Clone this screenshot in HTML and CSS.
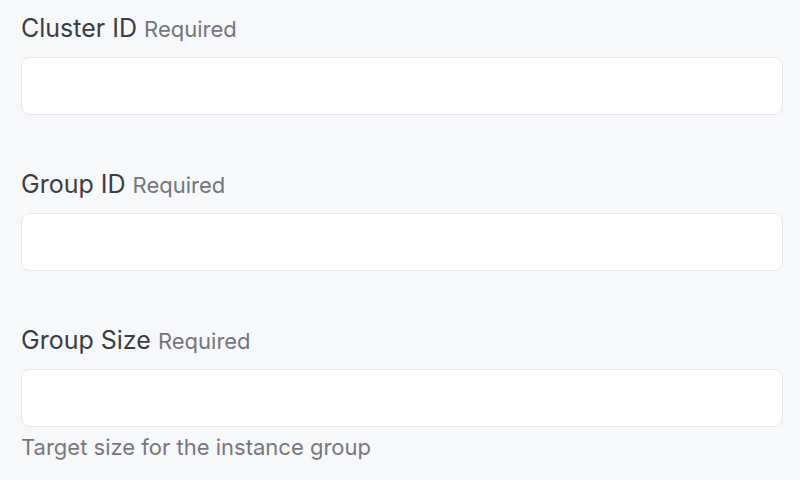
FILE: index.html
```html
<!DOCTYPE html>
<html>
    <head>
        <title>Instance Group</title>
        <link rel="stylesheet" href="styles.css">
    </head>
    <body>
        <form class="group-form">
            <div class="field">
                <label class="field-label" for="cluster_id">Cluster ID <span class="required">Required</span></label>
                <input class="field-input" type="text" id="cluster_id">
            </div>
            <div class="field">
                <label class="field-label" for="group_id">Group ID <span class="required">Required</span></label>
                <input class="field-input" type="text" id="group_id">
            </div>
            <div class="field">
                <label class="field-label" for="group_size">Group Size <span class="required">Required</span></label>
                <input class="field-input" type="text" id="group_size">
                <p class="help_text">Target size for the instance group</p>
            </div>
        </form>
    </body>
</html>
```

FILE: styles.css
```css
body {
	margin: 0;
	background: #f7f8fa;
	font-family: Inter, "Liberation Sans", sans-serif;
}
.group-form {
	padding: 11px 17px 0 21px; /* top right bottom left */
}
.field {
	margin-bottom: 52px;
}
.field:last-child {
	margin-bottom: 0;
}
.field-label {
	display: block;
	font-size: 25px;
	line-height: 34px;
	color: #3b3d43;
	margin-bottom: 11px;
}
.required {
	font-size: 22px;
	color: #74767c;
}
.field-input {
	display: block;
	box-sizing: border-box;
	width: 100%;
	height: 58px;
	margin: 0;
	border: 1.5px solid #e5e7eb;
	border-radius: 9px;
	background: #fff;
}
.help_text {
	font-size: 22px;
	color: #76787e;
	margin: 7px 0 0 0;
}
```
